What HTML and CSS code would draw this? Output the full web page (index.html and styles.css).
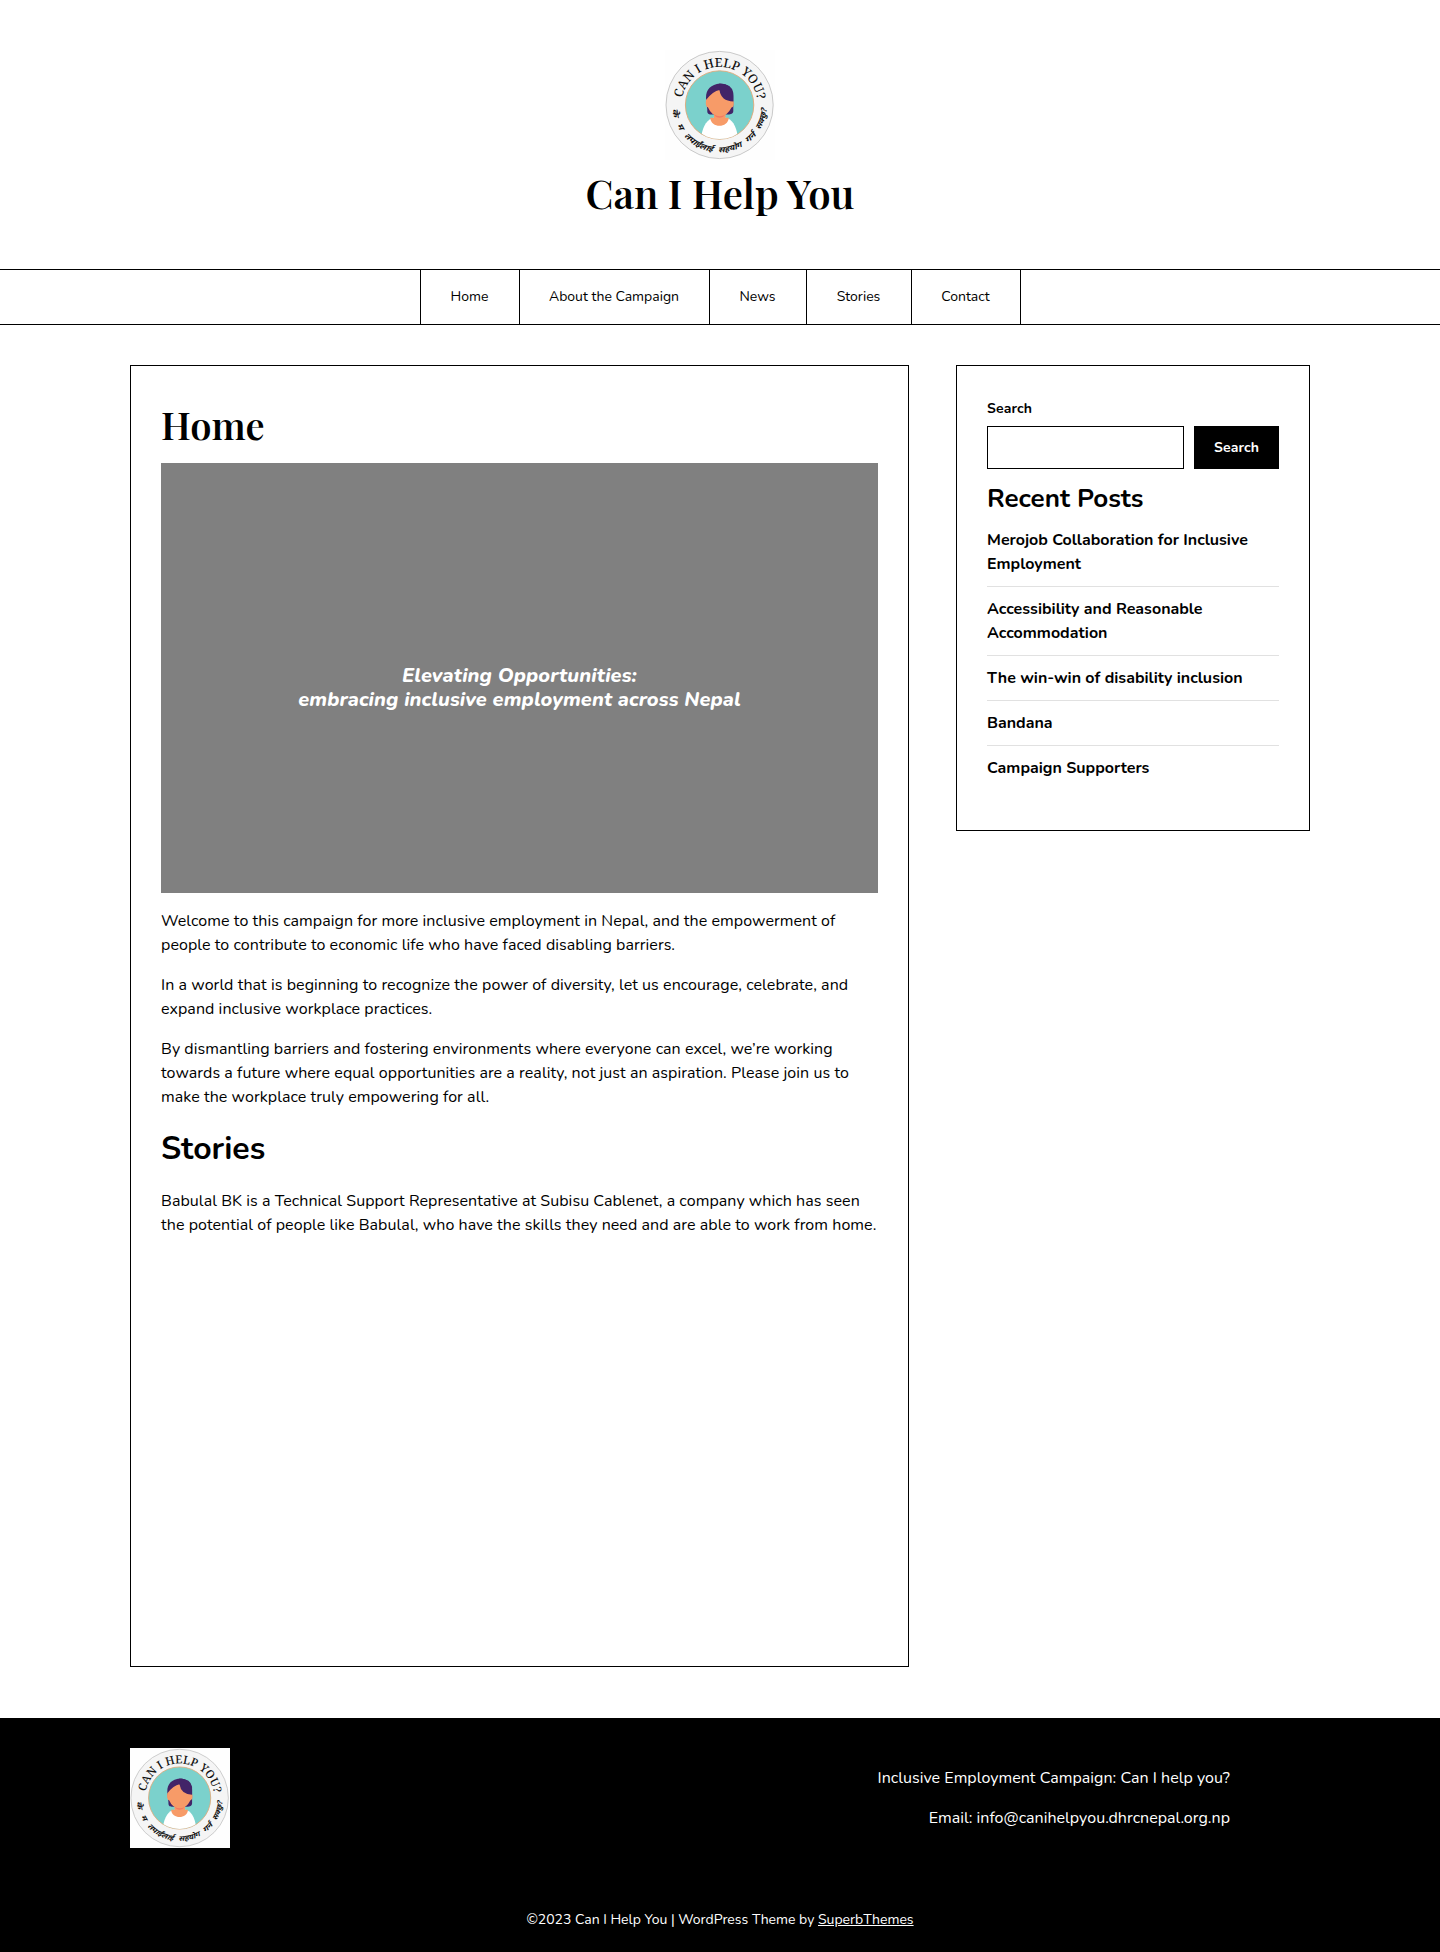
FILE: index.html
```html
<!DOCTYPE html>
<html lang="en">
<head>
<meta charset="utf-8">
<title>Can I Help You</title>
<link rel="stylesheet" href="styles.css">
</head>
<body>
<svg width="0" height="0" class="defs" aria-hidden="true">
  <defs>
    <path id="arc-top" d="M16.6 55A38 38 0 0 1 92.6 55"/>
    <path id="arc-bottom" d="M7.3 55A47.300 47.300 0 0 0 101.900 55"/>
    <clipPath id="disc"><circle cx="54.6" cy="55" r="34"/></clipPath>
    <symbol id="logo" viewBox="0 0 110 110">
      <rect width="110" height="110" fill="#fefefe"/>
      <circle cx="54.6" cy="55" r="53.6" fill="#f5f5f5" stroke="#b5b5b5" stroke-width=".7"/>
      <circle cx="54.6" cy="55" r="34.2" fill="#7bd1cc" stroke="#dfa877" stroke-width=".9"/>
      <g clip-path="url(#disc)">
        <path fill="#422468" d="M41 48C41 39 46 34.500 55 33.500C63 33.500 68.300 39 68.300 46V61C68.300 64 65 64.800 62 64.500H47C44 64.800 42 64 42.300 60Z"/>
        <path fill="#fff" d="M36.500 92V86C37.500 76 43 68.500 49 67.800H60.500C66.500 68.500 71.500 76 72.500 86V92Z"/>
        <path fill="#f79b68" d="M49 61H60.500V67.800H63.800C63 78.500 46 78.500 45.200 67.800H49Z"/>
        <path fill="#f79b68" d="M41 50Q48 41 54.500 40Q58 49 68.500 51Q69.500 57 66.500 57.500Q62 66.500 54.800 66.500Q47 66.500 43 57.500Q40 57 41 50Z"/>
        <path fill="#f47b62" d="M49 64.500Q55 68 60.500 64.500Q58 67.800 54.800 67.800Q51 67.800 49 64.500Z"/>
        <path fill="#422468" d="M54 33.800Q67 33.500 68.300 43V51.500Q56 51 54.500 40Z"/>
      </g>
      <text class="seal-top"><textPath href="#arc-top" startOffset="7" textLength="107" lengthAdjust="spacingAndGlyphs">CAN I HELP YOU?</textPath></text>
      <g class="seal-bottom">
        <text><textPath href="#arc-bottom" startOffset="4" textLength="8.500" lengthAdjust="spacingAndGlyphs">के</textPath></text>
        <text><textPath href="#arc-bottom" startOffset="21" textLength="6" lengthAdjust="spacingAndGlyphs">म</textPath></text>
        <text><textPath href="#arc-bottom" startOffset="34" textLength="33" lengthAdjust="spacingAndGlyphs">तपाईंलाई</textPath></text>
        <text><textPath href="#arc-bottom" startOffset="73" textLength="25" lengthAdjust="spacingAndGlyphs">सहयोग</textPath></text>
        <text><textPath href="#arc-bottom" startOffset="104" textLength="12" lengthAdjust="spacingAndGlyphs">गर्न</textPath></text>
        <text><textPath href="#arc-bottom" startOffset="122" textLength="23" lengthAdjust="spacingAndGlyphs">सक्छु?</textPath></text>
      </g>
    </symbol>
  </defs>
</svg>

<header class="site-header">
  <svg class="site-logo"><use href="#logo"/></svg>
  <h1 class="site-title">Can I Help You</h1>
</header>
<nav class="main-nav">
  <a>Home</a><a>About the Campaign</a><a>News</a><a>Stories</a><a>Contact</a>
</nav>

<div class="page">
  <main class="content">
    <h2 class="entry-title">Home</h2>
    <div class="hero"><p>Elevating Opportunities:<br>embracing inclusive employment across Nepal</p></div>
    <p>Welcome to this campaign for more inclusive employment in Nepal, and the empowerment of people to contribute to economic life who have faced disabling barriers.</p>
    <p>In a world that is beginning to recognize the power of diversity, let us encourage, celebrate, and expand inclusive workplace practices.</p>
    <p>By dismantling barriers and fostering environments where everyone can excel, we’re working towards a future where equal opportunities are a reality, not just an aspiration. Please join us to make the workplace truly empowering for all.</p>
    <h2 class="section-title">Stories</h2>
    <p>Babulal BK is a Technical Support Representative at Subisu Cablenet, a company which has seen the potential of people like Babulal, who have the skills they need and are able to work from home.</p>
  </main>
  <aside class="sidebar">
    <label class="search-label" for="q">Search</label>
    <div class="search-row"><input id="q" type="search"><button>Search</button></div>
    <h2 class="widget-title">Recent Posts</h2>
    <ul class="posts">
      <li>Merojob Collaboration for Inclusive Employment</li>
      <li>Accessibility and Reasonable Accommodation</li>
      <li>The win-win of disability inclusion</li>
      <li>Bandana</li>
      <li>Campaign Supporters</li>
    </ul>
  </aside>
</div>

<footer class="footer">
  <div class="footer-top">
    <svg class="footer-logo"><use href="#logo"/></svg>
    <div class="footer-info"><p>Inclusive Employment Campaign: Can I help you?</p><p>Email: info@canihelpyou.dhrcnepal.org.np</p></div>
  </div>
  <p class="copyright">©2023 Can I Help You | WordPress Theme by <a>SuperbThemes</a></p>
</footer>
</body>
</html>
```
FILE: styles.css
```css
* { box-sizing: border-box; }
body { margin: 0; background: #fff; color: #000; font: 400 16px/24px Nunito, Lato, sans-serif; }
h1, h2, p, ul { margin: 0; padding: 0; }
.defs { display: block; height: 0; }
.seal-top { font: 500 12.5px "Noto Serif", "Playfair Display", "Liberation Serif", serif; fill: #111; }
.seal-bottom { font: italic bold 8px "Noto Sans Devanagari", "Noto Sans", sans-serif; fill: #111; }

.site-header { height: 269px; padding-top: 50px; display: flex; flex-direction: column; align-items: center; }
.site-logo { width: 110px; height: 110px; }
.site-title { font: 600 40px/50px "Playfair Display", "Liberation Serif", serif; margin-top: 8px; white-space: nowrap; }
.main-nav { height: 56px; border: solid #000; border-width: 1px 0; display: grid; grid-template-columns: 100px 190px 97px 105px 109px; justify-content: center; font-size: 14px; line-height: 54px; }
.main-nav a { border-right: 1px solid #000; text-align: center; white-space: nowrap; }
.main-nav a:first-child { border-left: 1px solid #000; }

.page { width: 1180px; margin: 40px auto 51px; display: flex; justify-content: space-between; align-items: flex-start; }
.content { width: 779px; height: 1302px; border: 1px solid #000; padding: 34px 30px 0; }
.content p { margin-bottom: 16px; letter-spacing: .06px; }
.entry-title { font: 600 38px/50px "Playfair Display", "Liberation Serif", serif; margin-bottom: 13px; }
.hero { height: 430px; background: #808080; margin-bottom: 16px; display: flex; align-items: center; justify-content: center; }
.content .hero p { margin: 20px 0 0; color: #fff; font: italic 800 20px/24px Nunito, Lato, sans-serif; letter-spacing: .1px; text-align: center; }
.section-title { font-size: 32px; line-height: 40px; margin: 20px 0; }

.sidebar { width: 354px; height: 466px; border: 1px solid #000; padding: 31px 30px 0; font-weight: 700; }
.search-label { display: block; font-size: 14px; line-height: 24px; letter-spacing: .15px; margin-bottom: 5px; }
.search-row { display: flex; gap: 10px; }
.search-row input { flex: 1; min-width: 0; height: 43px; border: 1px solid #000; border-radius: 0; background: #fff; }
.search-row button { width: 85px; height: 43px; border: 0; padding: 0; background: #000; color: #fff; font: 700 14px Nunito, Lato, sans-serif; letter-spacing: .15px; }
.widget-title { font-size: 26px; line-height: 34px; margin: 13px 0 12px; }
.posts { list-style: none; }
.posts li { border-bottom: 1px solid #e1e1e1; padding-bottom: 10px; margin-bottom: 10px; }
.posts li:last-child { border: 0; }

.footer { height: 234px; background: #000; color: #fff; padding-top: 30px; }
.footer-top { width: 1180px; margin: 0 auto; display: flex; justify-content: space-between; padding-right: 80px; }
.footer-logo { width: 100px; height: 100px; }
.footer-info { text-align: right; padding-top: 18px; letter-spacing: .03px; }
.footer-info p { margin-bottom: 16px; }
.copyright { text-align: center; font-size: 14px; margin-top: 60px; }
.copyright a { text-decoration: underline; }
```
